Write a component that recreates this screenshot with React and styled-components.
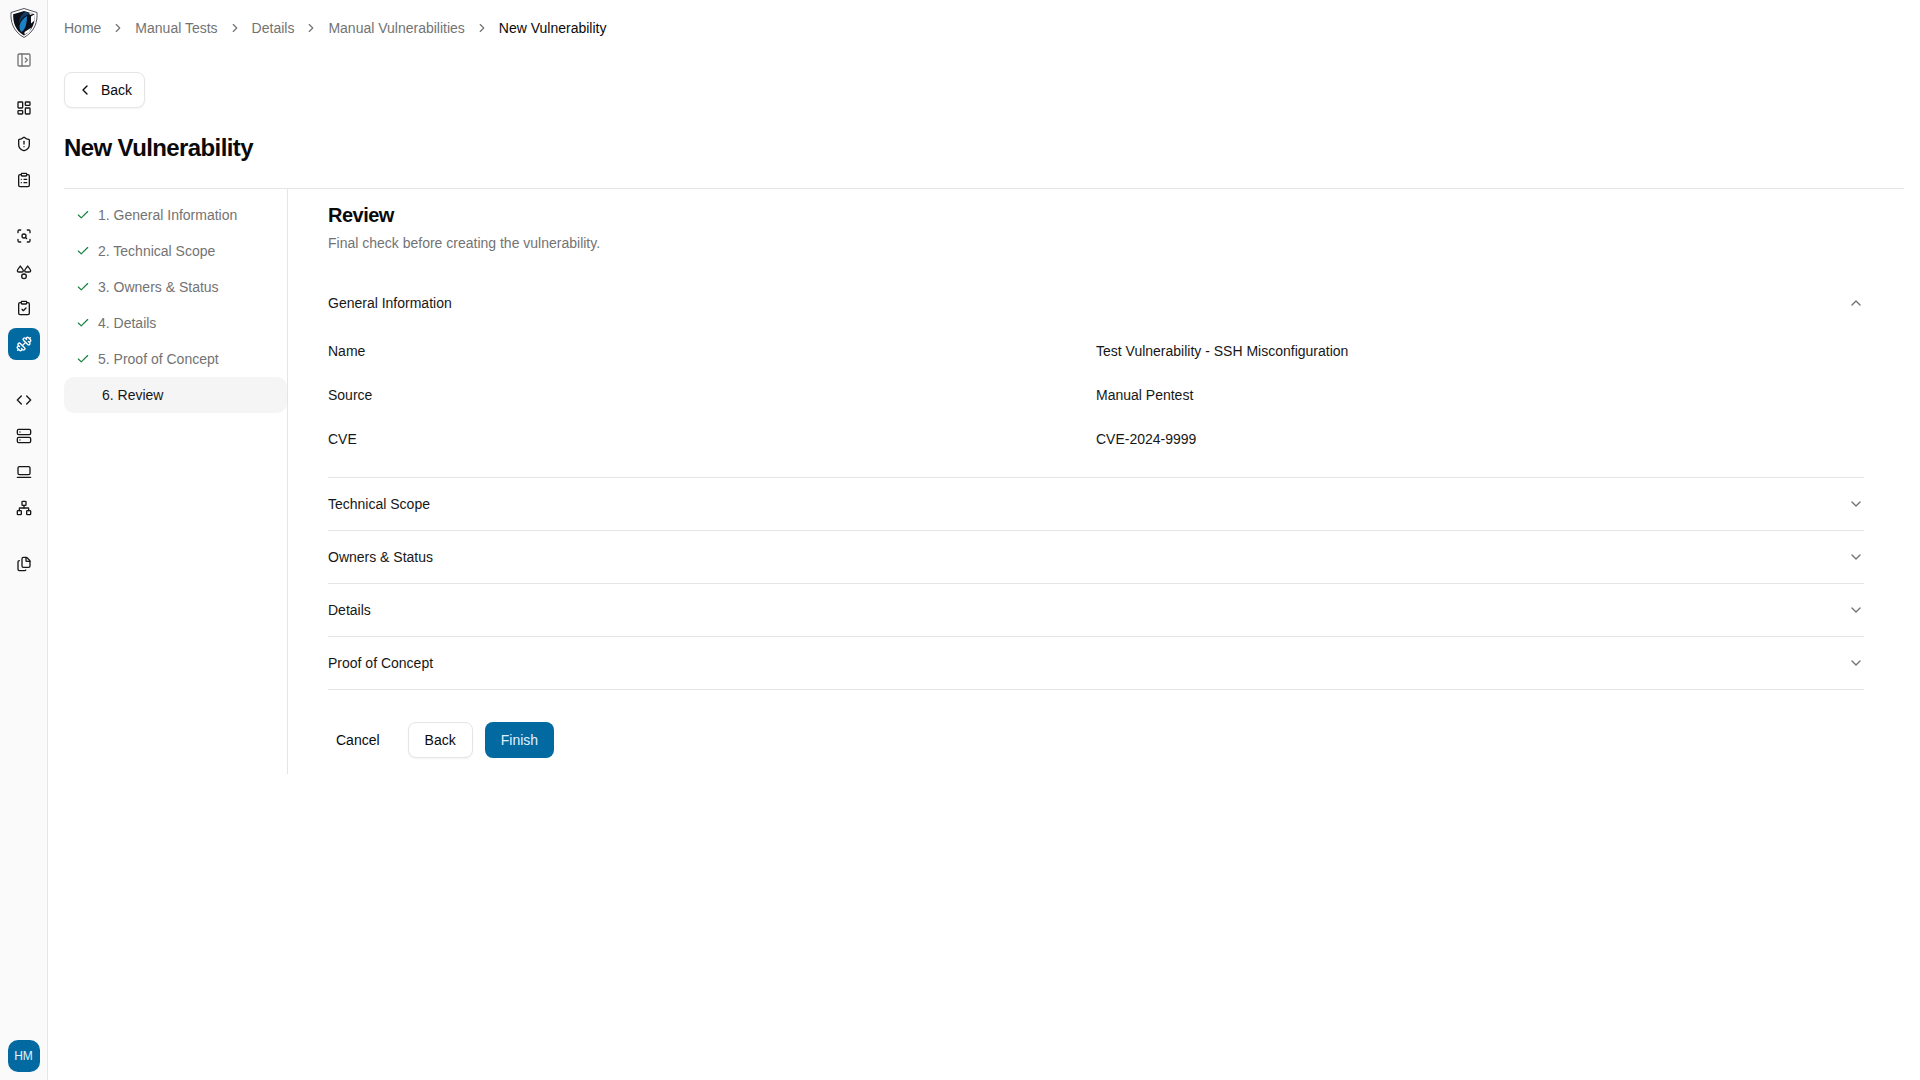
import React from 'react';
import styled, { createGlobalStyle } from 'styled-components';
import {
  PanelLeftOpen,
  LayoutDashboard,
  ShieldAlert,
  ClipboardList,
  ScanSearch,
  ClipboardCheck,
  Dumbbell,
  Code,
  Server,
  LaptopMinimal,
  Network,
  Files,
  ChevronRight,
  ChevronLeft,
  ChevronUp,
  ChevronDown,
  Check,
} from 'lucide-react';

const GlobalStyle = createGlobalStyle`
  html, body {
    margin: 0;
    padding: 0;
    background: #ffffff;
    font-family: "Liberation Sans", Arial, sans-serif;
    color: #0a0a0a;
  }
  * { box-sizing: border-box; }
`;

const Shell = styled.div`
  display: flex;
  height: 1080px;
  overflow: hidden;
`;

const Rail = styled.aside`
  width: 48px;
  flex: none;
  display: flex;
  flex-direction: column;
  align-items: center;
  background: #fafafa;
  border-right: 1px solid #e5e5e5;
  padding: 8px 0;
`;

const LogoBox = styled.div`
  height: 30px;
  margin-bottom: 6px;
  display: flex;
`;

const RailGroup = styled.div`
  display: flex;
  flex-direction: column;
  align-items: center;
  gap: 4px;
  margin-top: ${props => props.top || 0}px;
`;

const RailButton = styled.div`
  width: 32px;
  height: 32px;
  border-radius: 8px;
  display: flex;
  align-items: center;
  justify-content: center;
  color: ${props => (props.active ? '#ffffff' : '#171717')};
  background: ${props => (props.active ? '#0369a1' : 'transparent')};
`;

const Avatar = styled.div`
  margin-top: auto;
  width: 32px;
  height: 32px;
  border-radius: 10px;
  background: #0369a1;
  color: #e0f2fe;
  font-size: 12px;
  display: flex;
  align-items: center;
  justify-content: center;
`;

const Main = styled.main`
  flex: 1;
  min-width: 0;
  padding: 0 16px;
`;

const Crumbs = styled.nav`
  height: 56px;
  display: flex;
  align-items: center;
  gap: 10px;
  font-size: 14px;
  color: #737373;
`;

const Crumb = styled.span`
  color: ${props => (props.current ? '#0a0a0a' : '#737373')};
`;

const CrumbSep = styled(ChevronRight)`
  width: 14px;
  height: 14px;
`;

const OutlineButton = styled.button`
  height: 36px;
  border: 1px solid #e5e5e5;
  border-radius: 8px;
  background: #ffffff;
  box-shadow: 0 1px 2px rgba(0, 0, 0, 0.05);
  font: inherit;
  font-size: 14px;
  color: #0a0a0a;
  display: inline-flex;
  align-items: center;
  justify-content: center;
  gap: 8px;
  padding: 0 ${props => props.pad || 16}px;
`;

const BackRow = styled.div`
  margin-top: 16px;
  display: flex;
`;

const Heading = styled.h1`
  margin: 24px 0 0;
  font-size: 24px;
  line-height: 32px;
  font-weight: 700;
  letter-spacing: -0.6px;
`;

const Body = styled.div`
  margin-top: 24px;
  border-top: 1px solid #e5e5e5;
  display: flex;
  align-items: stretch;
`;

const Steps = styled.ul`
  list-style: none;
  margin: 0;
  padding: 8px 0 0;
  width: 224px;
  flex: none;
  border-right: 1px solid #e5e5e5;
`;

const Step = styled.li`
  height: 36px;
  border-radius: 10px;
  display: flex;
  align-items: center;
  gap: 8px;
  font-size: 14px;
  padding-left: ${props => (props.active ? 38 : 12)}px;
  color: ${props => (props.active ? '#171717' : '#737373')};
  background: ${props => (props.active ? '#f5f5f5' : 'transparent')};
`;

const StepCheck = styled(Check)`
  width: 14px;
  height: 14px;
  color: #15803d;
`;

const Content = styled.section`
  flex: 1;
  min-width: 0;
  padding: 12px 40px 16px;
`;

const Title = styled.h2`
  margin: 0;
  font-size: 20px;
  line-height: 28px;
  font-weight: 700;
  letter-spacing: -0.5px;
`;

const Subtitle = styled.p`
  margin: 4px 0 0;
  font-size: 14px;
  line-height: 20px;
  color: #737373;
`;

const Accordion = styled.div`
  margin-top: 24px;
`;

const Item = styled.div`
  border-bottom: 1px solid #e5e5e5;
`;

const ItemHead = styled.div`
  height: 52px;
  display: flex;
  align-items: center;
  justify-content: space-between;
  font-size: 14px;
  color: #171717;
`;

const ItemIcon = styled.span`
  display: flex;
  color: #737373;
`;

const Fields = styled.dl`
  margin: 0;
  padding: 0 0 16px;
  display: grid;
  grid-template-columns: 1fr 1fr;
  font-size: 14px;
  color: #171717;
`;

const FieldLabel = styled.dt`
  height: 44px;
  display: flex;
  align-items: center;
`;

const FieldValue = styled.dd`
  height: 44px;
  margin: 0;
  display: flex;
  align-items: center;
`;

const Actions = styled.div`
  margin-top: 32px;
  display: flex;
  align-items: center;
  gap: 12px;
`;

const GhostButton = styled.button`
  height: 36px;
  padding: 0 8px;
  margin-right: 8px;
  border: 0;
  background: transparent;
  font: inherit;
  font-size: 14px;
  color: #0a0a0a;
`;

const PrimaryButton = styled.button`
  height: 36px;
  padding: 0 16px;
  border: 0;
  border-radius: 8px;
  background: #0369a1;
  color: #e0f2fe;
  font: inherit;
  font-size: 14px;
`;

// three-lobed mark from the rail, not in the icon set
const Cluster = props => (
  <svg width="16" height="16" viewBox="0 0 24 24" fill="none" stroke="currentColor" strokeWidth="2" strokeLinecap="round" strokeLinejoin="round" {...props}>
    <path d="M6.500 3C5 5.500 2 8 2 10c0 1.300 1 2 2.200 2h4.600C10 12 11 11.300 11 10c0-2-3-4.500-4.500-7z" />
    <path d="M17.500 3C16 5.500 13 8 13 10c0 1.300 1 2 2.200 2h4.600c1.200 0 2.200-.7 2.200-2 0-2-3-4.500-4.500-7z" />
    <circle cx="12" cy="18.500" r="3.500" />
  </svg>
);

const Logo = () => (
  <svg width="28" height="30" viewBox="0 0 28 30">
    <path d="M14 .5 27 4.500C27.500 13 25.500 23 14 29.500 2.500 23 .5 13 1 4.500z" fill="#ffffff" stroke="#52525b" strokeWidth="1" />
    <path d="M14 3 24.800 6.200C25 13.500 23.500 22 14 27.500 4.500 22 3 13.500 3.200 6.200z" fill="#0b0f17" />
    <path d="M17 8C13 10.500 10 14 9.500 18c-.2 2.500.5 4.500 2 6 3-2 5.500-7 5.500-16z" fill="#1d82c4" />
    <path d="M16 3.500 19 6C15 7.500 11 11 9 15c0-5 3-9.500 7-11.500z" fill="#123a63" />
    <path d="M21 8.500l4-2.500-.5 6.500-3.500 3zM14.500 24l7-4.500-2.500 4.500-4.500 2.500z" fill="#ffffff" />
    <path d="M19 5l3-1 1 2-3 1z" fill="#d4d4d8" />
  </svg>
);

const crumbs = ['Home', 'Manual Tests', 'Details', 'Manual Vulnerabilities'];
const doneSteps = ['1. General Information', '2. Technical Scope', '3. Owners & Status', '4. Details', '5. Proof of Concept'];
const fields = [
  ['Name', 'Test Vulnerability - SSH Misconfiguration'],
  ['Source', 'Manual Pentest'],
  ['CVE', 'CVE-2024-9999'],
];
const closedSections = ['Technical Scope', 'Owners & Status', 'Details', 'Proof of Concept'];

const railGroups = [
  { top: 16, icons: [LayoutDashboard, ShieldAlert, ClipboardList] },
  { top: 24, icons: [ScanSearch, Cluster, ClipboardCheck, Dumbbell] },
  { top: 24, icons: [Code, Server, LaptopMinimal, Network] },
  { top: 24, icons: [Files] },
];

export default function App() {
  return (
    <Shell>
      <GlobalStyle />
      <Rail>
        <LogoBox>
          <Logo />
        </LogoBox>
        <RailButton>
          <PanelLeftOpen size={16} color="#737373" />
        </RailButton>
        {railGroups.map((group, g) => (
          <RailGroup key={g} top={group.top}>
            {group.icons.map((Icon, i) => (
              <RailButton key={i} active={Icon === Dumbbell}>
                <Icon size={16} />
              </RailButton>
            ))}
          </RailGroup>
        ))}
        <Avatar>HM</Avatar>
      </Rail>
      <Main>
        <Crumbs>
          {crumbs.map(c => (
            <React.Fragment key={c}>
              <Crumb>{c}</Crumb>
              <CrumbSep />
            </React.Fragment>
          ))}
          <Crumb current>New Vulnerability</Crumb>
        </Crumbs>
        <BackRow>
          <OutlineButton pad={12}>
            <ChevronLeft size={16} />
            Back
          </OutlineButton>
        </BackRow>
        <Heading>New Vulnerability</Heading>
        <Body>
          <Steps>
            {doneSteps.map(s => (
              <Step key={s}>
                <StepCheck />
                {s}
              </Step>
            ))}
            <Step active>6. Review</Step>
          </Steps>
          <Content>
            <Title>Review</Title>
            <Subtitle>Final check before creating the vulnerability.</Subtitle>
            <Accordion>
              <Item>
                <ItemHead>
                  General Information
                  <ItemIcon>
                    <ChevronUp size={16} />
                  </ItemIcon>
                </ItemHead>
                <Fields>
                  {fields.map(([k, v]) => (
                    <React.Fragment key={k}>
                      <FieldLabel>{k}</FieldLabel>
                      <FieldValue>{v}</FieldValue>
                    </React.Fragment>
                  ))}
                </Fields>
              </Item>
              {closedSections.map(s => (
                <Item key={s}>
                  <ItemHead>
                    {s}
                    <ItemIcon>
                      <ChevronDown size={16} />
                    </ItemIcon>
                  </ItemHead>
                </Item>
              ))}
            </Accordion>
            <Actions>
              <GhostButton>Cancel</GhostButton>
              <OutlineButton>Back</OutlineButton>
              <PrimaryButton>Finish</PrimaryButton>
            </Actions>
          </Content>
        </Body>
      </Main>
    </Shell>
  );
}
